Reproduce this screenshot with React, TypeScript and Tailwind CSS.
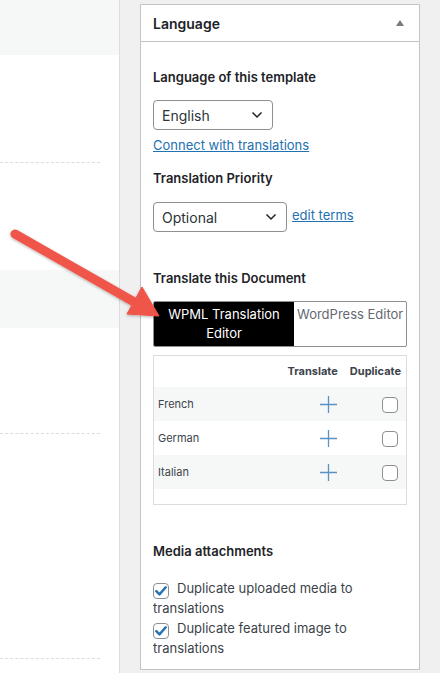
import React from 'react';

const languages = [
    { name: 'French', shaded: true },
    { name: 'German', shaded: false },
    { name: 'Italian', shaded: true },
];

const Chevron = () => (
    <svg width="12" height="8" viewBox="0 0 12 8" fill="none">
        <path d="M1.5 1.5 6 6l4.5-4.5" stroke="#1d2327" strokeWidth="1.5" />
    </svg>
);

const Select = ({ value, width }: { value: string; width: string }) => (
    <div className={`${width} h-[30px] border border-[#8c8f94] rounded-[4px] flex items-center justify-between pl-[8px] pr-[9px] text-[14px] text-[#2c3338]`}>
        <span>{value}</span>
        <Chevron />
    </div>
);

const CheckedBox = () => (
    <span className="inline-flex align-[-3px] w-[16px] h-[16px] border border-[#8c8f94] rounded-[4px] items-center justify-center mr-[8px]">
        <svg width="12" height="10" viewBox="0 0 12 10" fill="none">
            <path d="M1.3 5.2 4.5 8.4 10.7 1.3" stroke="#2271b1" strokeWidth="2.4" strokeLinecap="round" strokeLinejoin="round" />
        </svg>
    </span>
);

export default function App() {
    return (
        <div className="relative flex w-[440px] h-[673px] overflow-hidden font-['Inter','Liberation_Sans',sans-serif] text-[13px] text-[#3c434a]">
            {/* post list behind the sidebar */}
            <div className="w-[120px] shrink-0 bg-white border-r border-[#dcdcde]">
                <div className="h-[55px] bg-[#f6f7f7]" />
                <div className="h-[107px]" />
                <div className="w-[100px] border-t border-dashed border-[#dcdcde]" />
                <div className="h-[107px]" />
                <div className="h-[58px] bg-[#f6f7f7]" />
                <div className="h-[105px]" />
                <div className="w-[100px] border-t border-dashed border-[#dcdcde]" />
                <div className="h-[224px]" />
                <div className="w-[100px] border-t border-dashed border-[#dcdcde]" />
            </div>

            <div className="flex-1 bg-[#f0f0f1] pl-[20px] pt-[4px]">
                <div className="w-[280px] bg-white border border-[#c3c4c7]">
                    <div className="h-[37px] border-b border-[#c3c4c7] flex items-center justify-between pl-[12px] pr-[15px]">
                        <span className="text-[14px] font-semibold text-[#1d2327]">Language</span>
                        <svg width="8" height="6" viewBox="0 0 8 6">
                            <path d="M4 0 8 6H0z" fill="#787c82" />
                        </svg>
                    </div>

                    <div className="px-[12px] pb-[11px]">
                        <div className="mt-[26px] h-[18px] leading-[18px] font-semibold text-[#1d2327]">Language of this template</div>
                        <div className="mt-[14px]">
                            <Select value="English" width="w-[120px]" />
                        </div>
                        <div className="mt-[6px] h-[18px] leading-[18px]">
                            <a className="text-[#2271b1] underline">Connect with translations</a>
                        </div>

                        <div className="mt-[15px] h-[18px] leading-[18px] font-semibold text-[#1d2327]">Translation Priority</div>
                        <div className="mt-[15px] flex items-center gap-[5px]">
                            <Select value="Optional" width="w-[134px]" />
                            <a className="text-[#2271b1] underline -mt-[3px]">edit terms</a>
                        </div>

                        <div className="mt-[37px] h-[18px] leading-[18px] font-semibold text-[#1d2327]">Translate this Document</div>
                        <div className="mt-[14px] h-[46px] flex border border-[#8c8f94] rounded-[2px] overflow-hidden">
                            <div className="w-[140px] bg-black text-white text-center leading-[19px] pt-[3px]">
                                WPML Translation<br />Editor
                            </div>
                            <div className="flex-1 pl-[3px] pt-[3px] leading-[19px] text-[#646970] whitespace-nowrap">WordPress Editor</div>
                        </div>

                        <div className="mt-[8px] h-[150px] border border-[#dcdcde]">
                            <div className="h-[31px] flex items-center justify-end pr-[5px] text-[11px] font-bold text-[#3c434a]">
                                <span>Translate</span>
                                <span className="ml-[12px]">Duplicate</span>
                            </div>
                            {languages.map((lang) => (
                                <div
                                    key={lang.name}
                                    className={`h-[34px] flex items-center pl-[4px] pr-[8px] text-[11px] ${lang.shaded ? 'bg-[#f6f7f7]' : 'bg-white'}`}
                                >
                                    <span className="flex-1">{lang.name}</span>
                                    <svg width="17" height="17" viewBox="0 0 17 17" className="mt-[1px]">
                                        <path d="M8.5 0v17M0 8.5h17" stroke="#5893c4" strokeWidth="1.3" />
                                    </svg>
                                    <span className="ml-[45px] w-[16px] h-[16px] border border-[#8c8f94] rounded-[4px] bg-white mt-[2px]" />
                                </div>
                            ))}
                        </div>

                        <div className="mt-[37px] h-[18px] leading-[18px] font-semibold text-[#1d2327]">Media attachments</div>
                        <div className="mt-[19px] leading-[19.5px]">
                            <div>
                                <CheckedBox />
                                Duplicate uploaded media to<br />translations
                            </div>
                            <div>
                                <CheckedBox />
                                Duplicate featured image to<br />translations
                            </div>
                        </div>
                    </div>
                </div>
            </div>

            {/* callout arrow */}
            <svg className="absolute left-0 top-0 pointer-events-none" width="440" height="673" viewBox="0 0 440 673">
                <defs>
                    <filter id="shadow" x="-20%" y="-20%" width="140%" height="140%">
                        <feDropShadow dx="0" dy="1" stdDeviation="1.5" floodColor="#000" floodOpacity="0.3" />
                    </filter>
                </defs>
                <g filter="url(#shadow)" fill="#f0544a" stroke="#f0544a">
                    <line x1="15" y1="234" x2="136" y2="303" strokeWidth="9" strokeLinecap="round" />
                    <path d="M159 316 L142 287 L127 314 Z" strokeWidth="1" strokeLinejoin="round" />
                </g>
            </svg>
        </div>
    );
}
